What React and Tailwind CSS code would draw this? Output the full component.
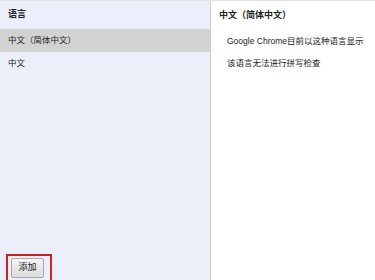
import React from "react";

export default function App() {
  const font = { fontFamily: '"Liberation Sans", "Noto Sans CJK SC", sans-serif' };
  return (
    <div
      className="w-[375px] h-[280px] flex overflow-hidden bg-white text-[#222] border-t border-[#e2e2e2] whitespace-nowrap"
      style={font}
    >
      <div className="w-[211px] shrink-0 flex flex-col bg-[#ebeff9] border-r border-[#cfcfcf]">
        <div className="h-[28px] flex items-center pl-2 text-[9px] font-bold">语言</div>
        <div className="h-[23px] flex items-center pl-2 text-[8.5px] bg-[#d2d2d2]">中文（简体中文）</div>
        <div className="h-[22px] flex items-center pl-2 text-[8.5px]">中文</div>
        <div className="flex-1" />
        <div className="pl-[6px]">
          <div className="w-[46px] h-[26px] border-2 border-[#d21f1f] border-b-0 pl-[3px] pt-[2px]">
            <div className="w-[33px] h-[20px] flex items-center justify-center text-[9px] border border-[#a9a9a9] rounded-[2px] bg-gradient-to-b from-[#f4f4f4] to-[#dcdcdc]">
              添加
            </div>
          </div>
        </div>
      </div>
      <div className="flex-1 flex flex-col pl-[8px]">
        <div className="h-[29px] flex items-center text-[9px] font-bold">中文（简体中文）</div>
        <div className="h-[22px] flex items-center pl-[8px] text-[8.5px]">Google Chrome目前以这种语言显示</div>
        <div className="h-[22px] flex items-center pl-[8px] text-[8.5px]">该语言无法进行拼写检查</div>
      </div>
    </div>
  );
}
